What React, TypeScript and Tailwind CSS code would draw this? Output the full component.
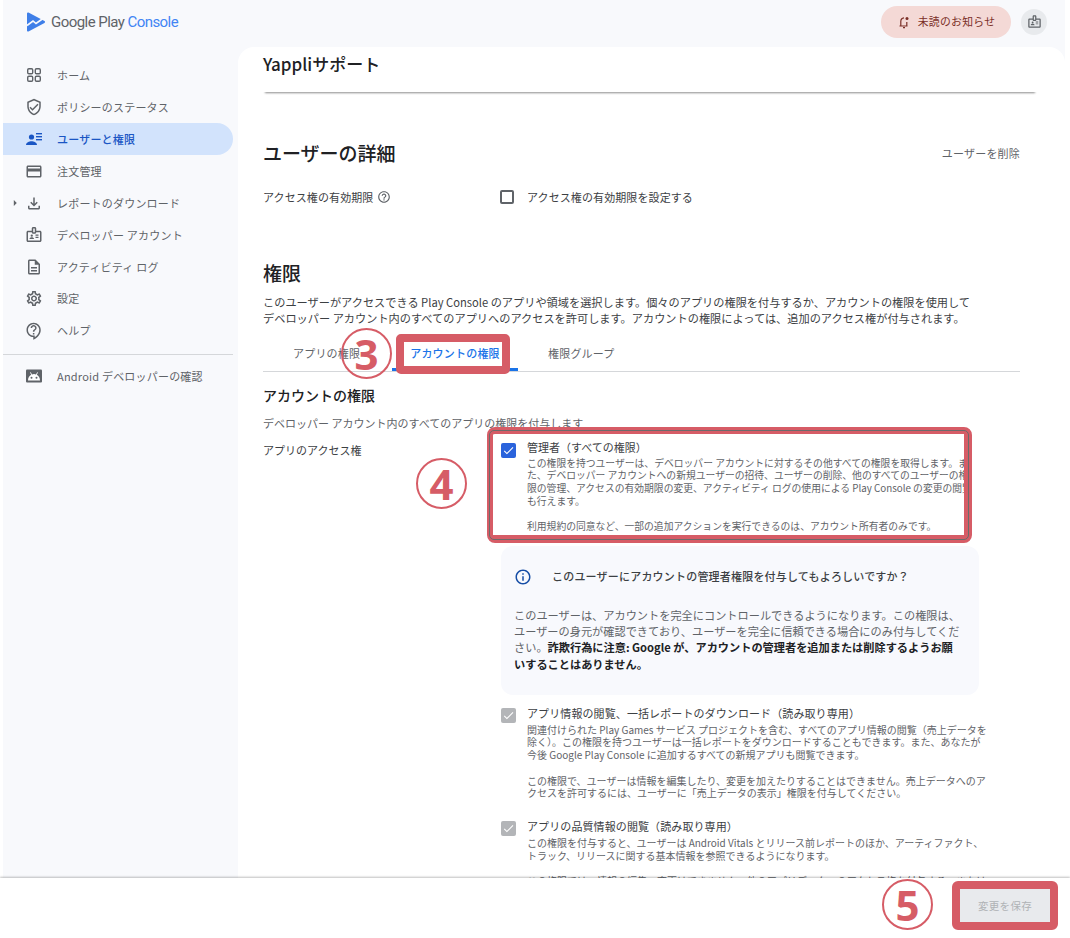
import type { ReactNode } from 'react'
import {
  MdOutlineVerifiedUser,
  MdOutlineCreditCard,
  MdOutlineFileDownload,
  MdOutlineBadge,
  MdOutlineDescription,
  MdOutlineSettings,
  MdOutlineContactSupport,
  MdArrowRight,
  MdOutlineInfo,
  MdCheck,
  MdOutlineHelpOutline,
} from 'react-icons/md'

const font = { fontFamily: '"Noto Sans CJK JP", "Noto Sans", sans-serif' }

function HomeIcon() {
  return (
    <svg width="18" height="18" viewBox="0 0 18 18" fill="none" stroke="#5f6368" strokeWidth="1.4">
      <rect x="2.700" y="2.700" width="5" height="5" rx="1.200" />
      <rect x="10.300" y="2.700" width="5" height="5" rx="1.200" />
      <rect x="2.700" y="10.300" width="5" height="5" rx="1.200" />
      <rect x="10.300" y="10.300" width="5" height="5" rx="1.200" />
    </svg>
  )
}

function UsersIcon() {
  return (
    <svg width="18" height="18" viewBox="0 0 18 18" fill="#1a56c4">
      <circle cx="6.5" cy="7" r="2.6" />
      <path d="M1 15c0-2.6 3.2-3.8 5.5-3.8S12 12.4 12 15z" />
      <rect x="11" y="3" width="6" height="1.4" />
      <rect x="11" y="6" width="6" height="1.4" />
      <rect x="11" y="9" width="6" height="1.4" />
    </svg>
  )
}

function AndroidIcon() {
  return (
    <svg width="18" height="18" viewBox="0 0 18 18">
      <rect x="1" y="2.500" width="16" height="13" rx="1" fill="#5f6368" />
      <path d="M3 13.500c0-2.600 1.300-4.700 3.200-5.700L5 5.600l.8-.4 1.200 2.200a6 6 0 0 1 4 0l1.200-2.200.8.4-1.200 2.200c1.900 1 3.200 3.100 3.200 5.700z" fill="#fff" />
      <circle cx="6.500" cy="10.800" r="1" fill="#5f6368" />
      <circle cx="11.500" cy="10.800" r="1" fill="#5f6368" />
    </svg>
  )
}

function Logo() {
  return (
    <svg width="20" height="22" viewBox="0 0 20 22">
      <path d="M2 2.500l16 8.500-16 8.500z" fill="#3f7fe8" stroke="#3f7fe8" strokeWidth="2" strokeLinejoin="round" />
      <path d="M1 14.500l6-4.500 3 2.500 7-5" fill="none" stroke="#f8f9fc" strokeWidth="1.600" />
    </svg>
  )
}

function BellIcon() {
  return (
    <svg width="14" height="14" viewBox="0 0 14 14" fill="none" stroke="#7a2e26" strokeWidth="1.200">
      <path d="M2.500 11h8M3.800 11V6.500C3.800 4.500 5 3 7 2.800M9.800 7v4M6 12.700h2" />
      <circle cx="10" cy="3.500" r="1.500" fill="#7a2e26" stroke="none" />
    </svg>
  )
}

const navItems: { label: string; icon: ReactNode; active?: boolean; arrow?: boolean }[] = [
  { label: 'ホーム', icon: <HomeIcon /> },
  { label: 'ポリシーのステータス', icon: <MdOutlineVerifiedUser size={18} /> },
  { label: 'ユーザーと権限', icon: <UsersIcon />, active: true },
  { label: '注文管理', icon: <MdOutlineCreditCard size={19} /> },
  { label: 'レポートのダウンロード', icon: <MdOutlineFileDownload size={19} />, arrow: true },
  { label: 'デベロッパー アカウント', icon: <MdOutlineBadge size={19} /> },
  { label: 'アクティビティ ログ', icon: <MdOutlineDescription size={18} /> },
  { label: '設定', icon: <MdOutlineSettings size={19} /> },
  { label: 'ヘルプ', icon: <MdOutlineContactSupport size={18} /> },
]

function NavRow({ label, icon, active, arrow }: { label: string; icon: ReactNode; active?: boolean; arrow?: boolean }) {
  return (
    <div
      className={`relative flex h-[31.9px] w-[230px] items-center gap-[14px] rounded-r-full pl-[22px] text-[11px] tracking-[0.2px] ${
        active ? 'bg-[#d2e3fc] font-medium text-[#1a56c4]' : 'text-[#5f6368]'
      }`}
    >
      {arrow && <MdArrowRight size={14} className="absolute left-[5px] top-[9px]" />}
      <span className="flex w-[18px] justify-center">{icon}</span>
      <span>{label}</span>
    </div>
  )
}

function Sidebar() {
  return (
    <aside className="flex w-[235px] shrink-0 flex-col pt-[12.500px]">
      {navItems.map((item) => (
        <NavRow key={item.label} {...item} />
      ))}
      <div className="mb-[6px] mt-[7px] h-px w-[230px] bg-[#d5d7da]" />
      <NavRow label="Android デベロッパーの確認" icon={<AndroidIcon />} />
    </aside>
  )
}

function Header() {
  return (
    <header className="flex h-[47px] items-center justify-between pl-[23px] pr-[18px]">
      <div className="flex items-center gap-[5px] pb-[3px]">
        <Logo />
        <span className="text-[15px] tracking-[-0.55px] text-[#5f6368]" style={{ fontFamily: 'Roboto, sans-serif' }}>
          Google Play <span className="text-[#4285f4]">Console</span>
        </span>
      </div>
      <div className="flex items-center gap-[10px] pb-[4px]">
        <div className="flex h-[32px] w-[130px] items-center justify-center gap-[7px] rounded-full bg-[#f4d9d6] text-[10.800px] tracking-[0.3px] text-[#7a2e26]">
          <BellIcon />
          未読のお知らせ
        </div>
        <div className="flex h-[26px] w-[26px] items-center justify-center rounded-full bg-[#e8eaed] text-[#5f6368]">
          <MdOutlineBadge size={15} />
        </div>
      </div>
    </header>
  )
}

function ReadOnlyPermission({ title, children }: { title: string; children: ReactNode }) {
  return (
    <div className="flex gap-[11px]">
      <span className="mt-[5px] flex h-[15px] w-[15px] shrink-0 items-center justify-center rounded-[2px] bg-[#b3b5b8] text-white">
        <MdCheck size={13} />
      </span>
      <div className="whitespace-nowrap">
        <div className="text-[11px] leading-[21px] tracking-[0.1px] text-[#3c4043]">{title}</div>
        <div className="text-[10px] leading-[12.700px] text-[#5f6368]">{children}</div>
      </div>
    </div>
  )
}

function MainPanel() {
  return (
    <main className="h-[831px] w-[827px] overflow-hidden rounded-t-[16px] bg-white pl-[25px]">
      <div className="h-[45px] w-[774px] pt-[5px] shadow-[0_3px_2px_-2px_rgba(0,0,0,0.45)]">
        <h1 className="text-[17px] font-medium leading-[24px] text-[#202124]">Yappliサポート</h1>
      </div>

      <div className="mt-[48px] flex w-[757px] items-center justify-between">
        <h2 className="text-[19px] font-medium leading-[26px] text-[#202124]">ユーザーの詳細</h2>
        <span className="text-[11px] tracking-[0.2px] text-[#5f6368]">ユーザーを削除</span>
      </div>
      <div className="mt-[23px] flex items-center text-[11px] tracking-[0.1px] text-[#3c4043]">
        <span className="flex w-[237px] items-center gap-[4px]">
          アクセス権の有効期限
          <MdOutlineHelpOutline size={14} className="text-[#5f6368]" />
        </span>
        <span className="h-[14px] w-[14px] rounded-[2px] border-2 border-[#5f6368]" />
        <span className="ml-[13px]">アクセス権の有効期限を設定する</span>
      </div>

      <h2 className="mt-[54px] text-[19px] font-medium leading-[26px] text-[#202124]">権限</h2>
      <p className="mt-[8px] whitespace-nowrap text-[11.200px] leading-[16px] text-[#3c4043]">
        このユーザーがアクセスできる Play Console のアプリや領域を選択します。個々のアプリの権限を付与するか、アカウントの権限を使用して
        <br />
        デベロッパー アカウント内のすべてのアプリへのアクセスを許可します。アカウントの権限によっては、追加のアクセス権が付与されます。
      </p>

      <div className="mt-[7px] flex h-[39px] w-[757px] border-b border-[#d5d7da] text-[11px] tracking-[0.2px]">
        <span className="ml-[30px] w-[99px] pt-[12px] text-[#5f6368]">アプリの権限</span>
        <span className="w-[126px] rounded-t-[3px] border-b-[3px] border-[#1a73e8] pt-[12px] text-center font-medium text-[#1a73e8]">アカウントの権限</span>
        <span className="ml-[30px] pt-[12px] text-[#5f6368]">権限グループ</span>
      </div>

      <h3 className="mt-[13px] text-[14px] font-medium leading-[20px] text-[#202124]">アカウントの権限</h3>
      <p className="mt-[10px] text-[11px] leading-[16px] text-[#5f6368]">デベロッパー アカウント内のすべてのアプリの権限を付与します</p>

      <div className="flex">
        <span className="w-[238px] pt-[11px] text-[11px] leading-[16px] text-[#3c4043]">アプリのアクセス権</span>
        <div>
          <div className="flex gap-[11px] pb-[10px]">
            <span className="mt-[12px] flex h-[15px] w-[15px] shrink-0 items-center justify-center rounded-[2px] bg-[#2a63dc] text-white">
              <MdCheck size={13} />
            </span>
            <div className="whitespace-nowrap pt-[6px]">
              <div className="text-[11px] leading-[20px] text-[#3c4043]">管理者（すべての権限）</div>
              <div className="text-[9.800px] leading-[12.700px] text-[#5f6368]">
                この権限を持つユーザーは、デベロッパー アカウントに対するその他すべての権限を取得します。ま
                <br />
                た、デベロッパー アカウントへの新規ユーザーの招待、ユーザーの削除、他のすべてのユーザーの権
                <br />
                限の管理、アクセスの有効期限の変更、アクティビティ ログの使用による Play Console の変更の閲覧
                <br />
                も行えます。
                <br />
                <br />
                利用規約の同意など、一部の追加アクションを実行できるのは、アカウント所有者のみです。
              </div>
            </div>
          </div>

          <div className="mt-[3px] h-[149px] w-[478px] rounded-[12px] bg-[#f8f9fd] px-[13px] pt-[22px]">
            <div className="flex items-center gap-[20px] text-[11px] font-medium tracking-[0.2px] text-[#3c4043]">
              <MdOutlineInfo size={18} className="text-[#174ea6]" />
              このユーザーにアカウントの管理者権限を付与してもよろしいですか？
            </div>
            <p className="mt-[21px] whitespace-nowrap text-[11.200px] leading-[16.300px] text-[#5f6368]">
              このユーザーは、アカウントを完全にコントロールできるようになります。この権限は、
              <br />
              ユーザーの身元が確認できており、ユーザーを完全に信頼できる場合にのみ付与してくだ
              <br />
              さい。<b className="font-bold text-[#202124]">詐欺行為に注意: Google が、アカウントの管理者を追加または削除するようお願</b>
              <br />
              <b className="font-bold text-[#202124]">いすることはありません。</b>
            </p>
          </div>

          <div className="mt-[8px] flex flex-col gap-[16px]">
            <ReadOnlyPermission title="アプリ情報の閲覧、一括レポートのダウンロード（読み取り専用）">
              関連付けられた Play Games サービス プロジェクトを含む、すべてのアプリ情報の閲覧（売上データを
              <br />
              除く）。この権限を持つユーザーは一括レポートをダウンロードすることもできます。また、あなたが
              <br />
              今後 Google Play Console に追加するすべての新規アプリも閲覧できます。
              <br />
              <br />
              この権限で、ユーザーは情報を編集したり、変更を加えたりすることはできません。売上データへのア
              <br />
              クセスを許可するには、ユーザーに「売上データの表示」権限を付与してください。
            </ReadOnlyPermission>
            <ReadOnlyPermission title="アプリの品質情報の閲覧（読み取り専用）">
              この権限を付与すると、ユーザーは Android Vitals とリリース前レポートのほか、アーティファクト、
              <br />
              トラック、リリースに関する基本情報を参照できるようになります。
              <br />
              <br />
              この権限では、情報の編集、変更はできません。他のアプリデータへのアクセス権を付与する、または
            </ReadOnlyPermission>
          </div>
        </div>
      </div>
    </main>
  )
}

function Footer() {
  return (
    <footer className="relative z-10 flex h-[60px] justify-end bg-white pr-[20px] pt-[11px] shadow-[0_-1px_2px_rgba(0,0,0,0.25)]">
      <button className="h-[33px] w-[90px] bg-[#e8eaed] text-[10.500px] tracking-[0.3px] text-[#b0b3b6]">変更を保存</button>
    </footer>
  )
}

function Marker({ n, className }: { n: string; className: string }) {
  return (
    <div
      className={`absolute z-20 flex h-[51px] w-[51px] items-center justify-center rounded-full border-2 border-[#d65c66] text-[42px] font-bold leading-none text-[#d65c66] ${className}`}
      style={{ fontFamily: '"Noto Sans", sans-serif' }}
    >
      {n}
    </div>
  )
}

export default function App() {
  return (
    <div className="relative h-[938px] w-[1070px] overflow-hidden bg-white" style={font}>
      <div className="ml-[3px] flex h-[878px] w-[1062px] flex-col bg-[#f8f9fc]">
        <Header />
        <div className="flex">
          <Sidebar />
          <MainPanel />
        </div>
      </div>
      <Footer />

      <Marker n="3" className="left-[341px] top-[328px]" />
      <Marker n="4" className="left-[416px] top-[458px]" />
      <Marker n="5" className="left-[882px] top-[879px]" />
      <div className="absolute left-[396px] top-[334px] z-20 h-[40px] w-[114px] rounded-[5px] border-[8px] border-[#d65c66]" />
      <div className="absolute left-[487px] top-[427px] z-20 h-[116px] w-[485px] rounded-[8px] border-b-[8px] border-l-[6px] border-r-[8px] border-t-[7px] border-[#d65c66]" />
      <div className="absolute left-[489px] top-[430px] z-20 h-[110px] w-[480px] rounded-[5px] border-[1.500px] border-[#6b6b6b]" />
      <div className="absolute left-[952px] top-[881px] z-20 h-[49px] w-[106px] rounded-[6px] border-[8px] border-[#d65c66]" />
    </div>
  )
}
